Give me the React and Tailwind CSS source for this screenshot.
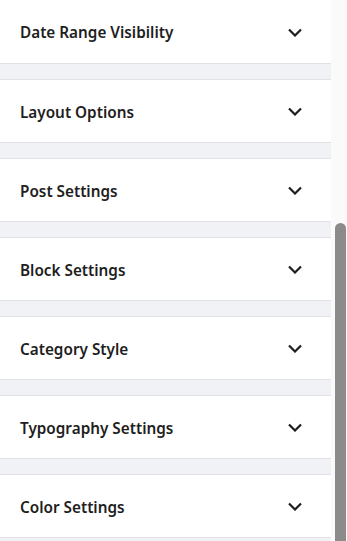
const panels = [
  "Date Range Visibility",
  "Layout Options",
  "Post Settings",
  "Block Settings",
  "Category Style",
  "Typography Settings",
  "Color Settings",
];

function Chevron() {
  return (
    <svg width="14" height="9" viewBox="0 0 14 9" fill="none" className="stroke-[#1e1e1e]">
      <path d="M1 1.5l6 6 6-6" strokeWidth="2.2" />
    </svg>
  );
}

export default function App() {
  return (
    <div className="flex h-[541px] w-[347px] overflow-hidden bg-white font-['Noto_Sans',sans-serif]">
      <div className="flex w-[331px] flex-col gap-[15px] bg-[#f0f2f5]">
        {panels.map((title, i) => (
          <div
            key={title}
            className={`flex h-[64px] shrink-0 items-center justify-between border-b border-[#e0e2e6] bg-white pl-5 pr-[29px] ${
              i === 0 ? "h-[63px]" : "border-t"
            }`}
          >
            <span className="pt-[2px] text-[15.3px] font-semibold text-[#1e1e1e]">{title}</span>
            <span className="pt-[1px]">
              <Chevron />
            </span>
          </div>
        ))}
      </div>
      <div className="flex w-[16px] flex-col bg-[#fafafa] pt-[223px] pl-[4px] pr-[1px]">
        <div className="flex-1 rounded-t-full bg-[#8b8b8b]" />
      </div>
    </div>
  );
}
